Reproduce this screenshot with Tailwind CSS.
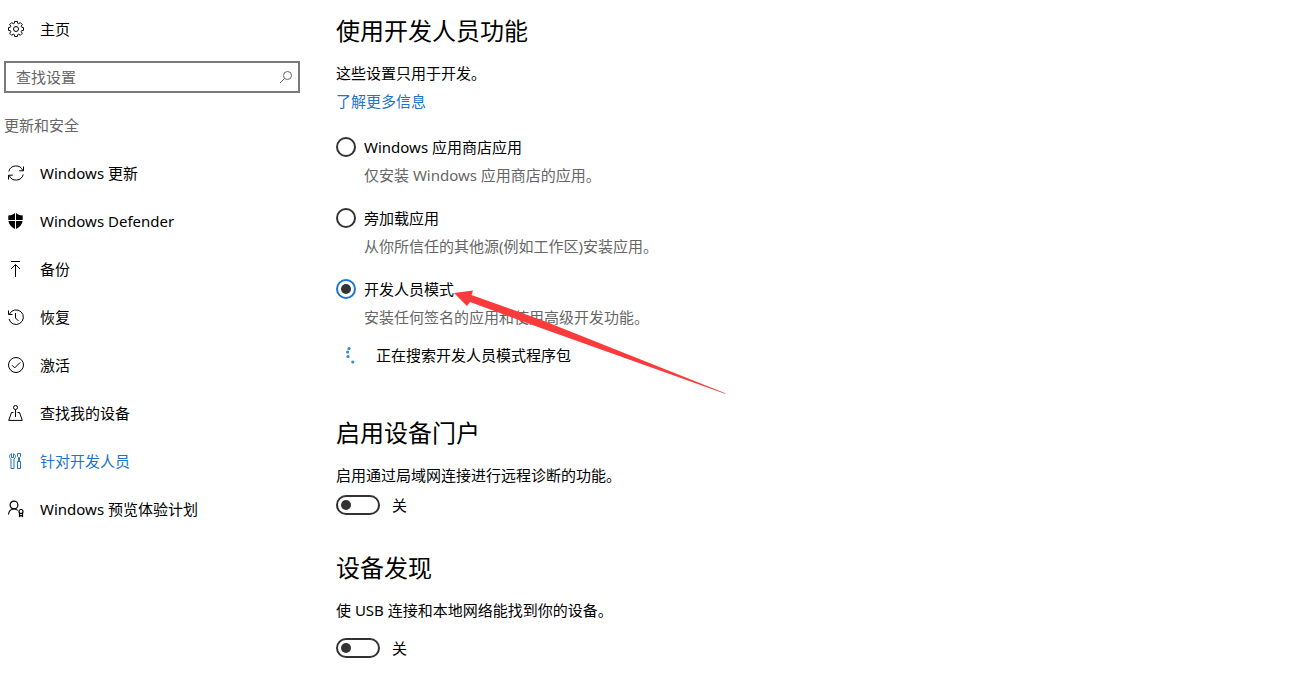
<!DOCTYPE html>
<html lang="zh-CN">
<head>
  <meta charset="UTF-8" />
  <meta name="viewport" content="width=device-width, initial-scale=1.0" />
  <title>设置 - 针对开发人员</title>
  <script src="https://cdn.jsdelivr.net/npm/@tailwindcss/browser@4"></script>
</head>
<body class="bg-white font-['Noto_Sans','Noto_Sans_CJK_SC',sans-serif] text-[15px] text-black">
  <div class="flex min-h-screen">
    <!-- Sidebar -->
    <aside class="w-[300px] shrink-0 pt-[5px] pl-1">
      <a href="#" class="flex h-12 items-center gap-4 pl-1">
        <svg class="size-4 overflow-visible" viewBox="0 0 16 16" fill="none" stroke="currentColor" stroke-linejoin="round">
          <path d="M6.3 2.300 6.600.4h2.800l.3 1.900 1 .4 1.600-1.100 2 2-1.100 1.600.4 1 1.900.4v2.800l-1.900.3-.4 1 1.100 1.600-2 2-1.600-1.100-1 .4-.3 1.900H6.600l-.3-1.900-1-.4-1.600 1.100-2-2 1.100-1.600-.4-1L.5 9.400V6.600l1.900-.4.4-1-1.100-1.600 2-2 1.600 1.100z" />
          <circle cx="8" cy="8" r="2.500" />
        </svg>
        主页
      </a>
      <form class="flex h-12 items-center" role="search">
        <div class="flex h-8 w-full items-center border-2 border-[#7a7a7a] pr-1 pl-[10px]">
          <input type="search" aria-label="查找设置" placeholder="查找设置" class="min-w-0 flex-1 outline-none placeholder:text-[#666]" />
          <button type="submit" aria-label="搜索" class="text-[#666]">
            <svg class="size-4" viewBox="0 0 16 16" fill="none" stroke="currentColor">
              <circle cx="9.500" cy="6.500" r="4" />
              <path d="M6.500 9.500 2 14" />
            </svg>
          </button>
        </div>
      </form>
      <h1 class="flex h-12 items-center text-[#666]">更新和安全</h1>
      <nav>
        <a href="#" class="flex h-12 items-center gap-4 pl-1">
          <svg class="size-4 overflow-visible" viewBox="0 0 16 16" fill="none" stroke="currentColor">
            <path d="M.8 6.500A7.400 7.400 0 0 1 14.800 5.500M15.500 1.500v4.300h-4.300M15.200 9.500A7.400 7.400 0 0 1 1.200 10.500M.5 14.500v-4.300h4.300" />
          </svg>
          Windows 更新
        </a>
        <a href="#" class="flex h-12 items-center gap-4 pl-1">
          <svg class="size-4" viewBox="0 0 16 16" fill="currentColor">
            <path d="M7 0v7H.3V2.400C3 2.400 5.400 1.500 7 0ZM8 0v7h6.700V2.400C12 2.400 9.600 1.500 8 0ZM.4 8H7v8C3.500 14.300.9 11.500.4 8ZM8 8h6.600C14.100 11.500 11.500 14.300 8 16Z" />
          </svg>
          Windows Defender
        </a>
        <a href="#" class="flex h-12 items-center gap-4 pl-1">
          <svg class="size-4" viewBox="0 0 16 16" fill="none" stroke="currentColor">
            <path d="M3 .5h9M7.500 16V3.500M3 8l4.500-4.500L12 8" />
          </svg>
          备份
        </a>
        <a href="#" class="flex h-12 items-center gap-4 pl-1">
          <svg class="size-4 overflow-visible" viewBox="0 0 16 16" fill="none" stroke="currentColor">
            <path d="M1.500 5A7.300 7.300 0 1 1 1 10M.5 1.500v4h4M7.500 4v5l3 3" />
          </svg>
          恢复
        </a>
        <a href="#" class="flex h-12 items-center gap-4 pl-1">
          <svg class="size-4 overflow-visible" viewBox="0 0 16 16" fill="none" stroke="currentColor">
            <circle cx="8" cy="8" r="7.500" />
            <path d="m4 8.200 2.700 2.700L12.200 5.400" />
          </svg>
          激活
        </a>
        <a href="#" class="flex h-12 items-center gap-4 pl-1">
          <svg class="size-4" viewBox="0 0 16 16" fill="none" stroke="currentColor">
            <circle cx="7.500" cy="2.500" r="2" />
            <path d="M7.500 4.500V12M5.500 7.500h-2L.7 15.400h13.600L11.500 7.500h-2" />
          </svg>
          查找我的设备
        </a>
        <a href="#" aria-current="page" class="flex h-12 items-center gap-4 pl-1 text-[#1f74cd]">
          <svg class="size-4" viewBox="0 0 16 16" fill="none" stroke="currentColor">
            <path d="M3.500.8v3.700h2V.8C6.900 1.300 7.500 2.300 7.500 3.500c0 1-.5 1.900-1.500 2.500v9.500H3V6C2 5.400 1.500 4.500 1.500 3.500c0-1.200.600-2.200 2-2.700ZM9.500.5h3v3l-1 1v4h-1v-4l-1-1ZM9.500 8.500h3v7h-3z" />
          </svg>
          针对开发人员
        </a>
        <a href="#" class="flex h-12 items-center gap-4 pl-1">
          <svg class="size-4 overflow-visible" viewBox="0 0 16 16" fill="none" stroke="currentColor" stroke-width="1.200">
            <circle cx="6" cy="4" r="3.900" />
            <path d="M.5 13.500C.8 10.200 3 8 6 8c1.500 0 2.800.5 3.800 1.400" />
            <circle cx="13" cy="10.500" r="2" />
            <path d="M11.500 12v3.500l1.500-1 1.500 1V12" />
          </svg>
          Windows 预览体验计划
        </a>
      </nav>
    </aside>

    <!-- Content -->
    <main class="min-w-0 flex-1 pt-[15px] pl-9 leading-7">
      <section>
        <h2 class="mb-3 text-2xl/8">使用开发人员功能</h2>
        <p>这些设置只用于开发。</p>
        <a href="#" class="block w-fit text-[#1f74cd]">了解更多信息</a>

        <div role="radiogroup" aria-label="开发人员功能" class="mt-[18px] space-y-[15px]">
          <div>
            <label class="flex w-fit items-center gap-2">
              <input type="radio" name="mode" class="flex size-5 appearance-none items-center justify-center rounded-full border-2 border-[#333] checked:border-[#1f74cd] checked:before:size-[10px] checked:before:rounded-full checked:before:bg-[#333]" />
              Windows 应用商店应用
            </label>
            <p class="pl-7 text-[#666]">仅安装 Windows 应用商店的应用。</p>
          </div>
          <div>
            <label class="flex w-fit items-center gap-2">
              <input type="radio" name="mode" class="flex size-5 appearance-none items-center justify-center rounded-full border-2 border-[#333] checked:border-[#1f74cd] checked:before:size-[10px] checked:before:rounded-full checked:before:bg-[#333]" />
              旁加载应用
            </label>
            <p class="pl-7 text-[#666]">从你所信任的其他源(例如工作区)安装应用。</p>
          </div>
          <div class="relative">
            <label class="flex w-fit items-center gap-2">
              <input type="radio" name="mode" checked class="flex size-5 appearance-none items-center justify-center rounded-full border-2 border-[#333] checked:border-[#1f74cd] checked:before:size-[10px] checked:before:rounded-full checked:before:bg-[#333]" />
              开发人员模式
            </label>
            <p class="pl-7 text-[#666]">安装任何签名的应用和使用高级开发功能。</p>
            <!-- Pointer arrow -->
            <svg class="pointer-events-none absolute top-[15px] left-[118px] h-[104px] w-[272px]" viewBox="0 0 272 104" fill="#fb3b3b">
              <path d="M0 3 19 .5 17.500 5 90 31 272 103.500 271 103.800 84 37 16 12 13 16Z" />
            </svg>
          </div>
        </div>

        <div role="status" class="mt-[10px] flex items-center gap-5">
          <svg class="size-5" viewBox="0 0 20 20" fill="#3a86d8">
            <circle cx="13" cy="3.500" r="1.600" />
            <circle cx="11.600" cy="7" r="1.600" />
            <circle cx="12" cy="11.500" r="1.600" />
            <circle cx="16.800" cy="17" r="1.600" />
          </svg>
          正在搜索开发人员模式程序包
        </div>
      </section>

      <section class="mt-12">
        <h2 class="mb-3 text-2xl/8">启用设备门户</h2>
        <p id="portal">启用通过局域网连接进行远程诊断的功能。</p>
        <label class="mt-[6px] flex h-5 w-fit items-center gap-3">
          <input type="checkbox" role="switch" aria-describedby="portal" class="flex h-5 w-11 appearance-none items-center rounded-full border-2 border-[#333] px-[3px] before:size-[10px] before:rounded-full before:bg-[#333] checked:justify-end" />
          关
        </label>
      </section>

      <section class="mt-[37px]">
        <h2 class="mb-3 text-2xl/8">设备发现</h2>
        <p id="discovery">使 USB 连接和本地网络能找到你的设备。</p>
        <label class="mt-[14px] flex h-5 w-fit items-center gap-3">
          <input type="checkbox" role="switch" aria-describedby="discovery" class="flex h-5 w-11 appearance-none items-center rounded-full border-2 border-[#333] px-[3px] before:size-[10px] before:rounded-full before:bg-[#333] checked:justify-end" />
          关
        </label>
      </section>
    </main>
  </div>
</body>
</html>
